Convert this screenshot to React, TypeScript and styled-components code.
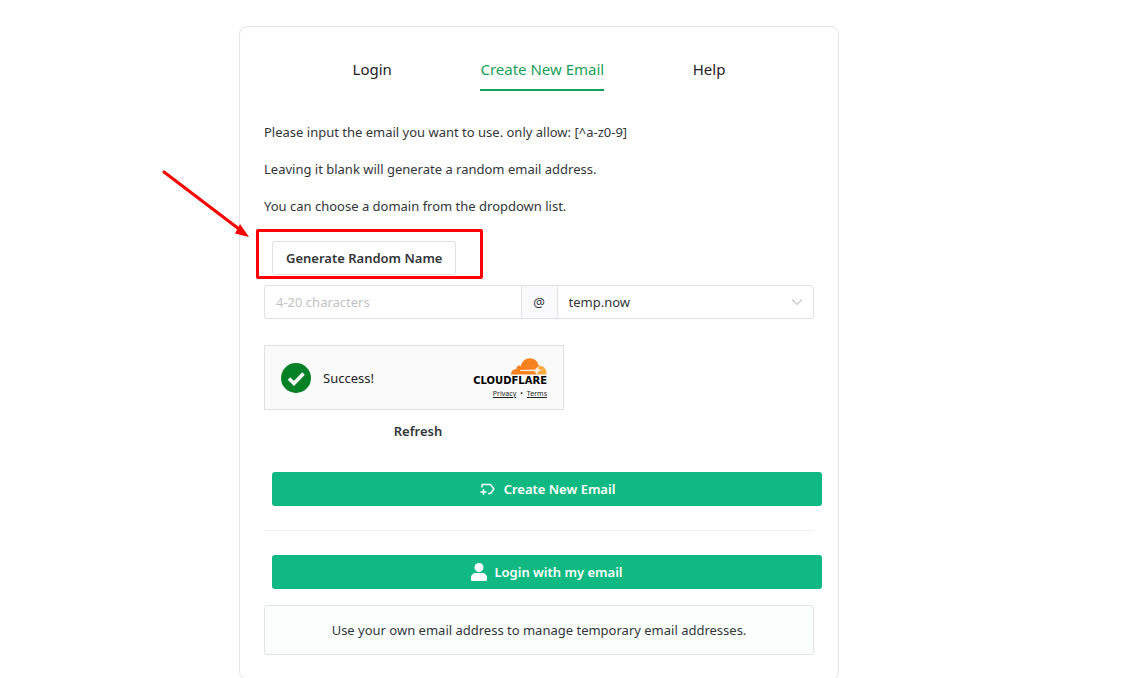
import React from "react";
import styled, { createGlobalStyle } from "styled-components";
import { MdOutlineNewLabel } from "react-icons/md";

const GlobalStyle = createGlobalStyle`
  *, *::before, *::after { box-sizing: border-box; }
  body {
    margin: 0;
    background: #fff;
    color: #333639;
    font-family: "Segoe UI", "Noto Sans", "Open Sans", sans-serif;
    font-size: 13px;
    line-height: 22px;
  }
  button, input, select { font: inherit; color: inherit; margin: 0; }
`;

const Page = styled.main`
  display: flex;
  justify-content: center;
  padding: 26px 50px 0 0;
`;

const Card = styled.section`
  width: 100%;
  max-width: 600px;
  padding: 24px;
  border: 1px solid #e6e6e9;
  border-radius: 8px;
`;

const Tabs = styled.nav`
  display: flex;
  justify-content: space-evenly;
  margin-bottom: 30px;
`;

const Tab = styled.button<{ $active?: boolean }>`
  padding: 5px 0 7px;
  border: 0;
  border-bottom: 2px solid ${(p) => (p.$active ? "#18a058" : "transparent")};
  background: none;
  color: ${(p) => (p.$active ? "#18a058" : "#1f2225")};
  font-size: 15px;
  line-height: 26px;
  cursor: pointer;
`;

const Form = styled.form`
  display: flex;
  flex-direction: column;
`;

const Notes = styled.div`
  display: flex;
  flex-direction: column;
  gap: 15px;
  margin-bottom: 24px;
`;

const Note = styled.p`
  margin: 0;
`;

const Marked = styled.div`
  position: relative;
  align-self: flex-start;
  margin: 0 0 10px 8px;
`;

const Highlight = styled.span`
  position: absolute;
  top: -12px;
  left: -16px;
  width: 227px;
  height: 50px;
  border: 3px solid #fe0000;
  border-radius: 2px;
  pointer-events: none;
`;

const Arrow = styled.svg`
  position: absolute;
  top: -73px;
  left: -112px;
  pointer-events: none;
`;

const Button = styled.button`
  display: block;
  height: 34px;
  padding: 0 13px;
  border: 1px solid #e0e0e6;
  border-radius: 3px;
  background: #fff;
  font-weight: 600;
  white-space: nowrap;
  cursor: pointer;
`;

const RefreshButton = styled(Button)`
  align-self: center;
  margin: 4px 0 0 8px;
  border-color: transparent;
`;

const PrimaryButton = styled(Button)`
  display: flex;
  align-items: center;
  justify-content: center;
  gap: 7px;
  width: 100%;
  margin-left: 8px;
  border: 0;
  background: #10b981;
  color: #fff;
`;

const InputGroup = styled.div`
  display: grid;
  grid-template-columns: minmax(0, 1fr) 37px minmax(0, 1fr);
  height: 34px;
  border: 1px solid #e0e0e6;
  border-radius: 3px;
  margin-bottom: 26px;
`;

const NameInput = styled.input`
  width: 100%;
  padding: 0 11px;
  border: 0;
  background: transparent;
  outline: none;
  &::placeholder { color: #c2c2c2; opacity: 1; }
`;

const At = styled.span`
  border: solid #e0e0e6;
  border-width: 0 1px;
  background: #fafafc;
  line-height: 32px;
  text-align: center;
`;

const SelectBox = styled.div`
  display: grid;
  align-items: center;
  > * { grid-area: 1 / 1; }
  > svg { justify-self: end; margin-right: 10px; pointer-events: none; }
`;

const DomainSelect = styled.select`
  width: 100%;
  height: 32px;
  padding: 0 30px 0 11px;
  border: 0;
  background: transparent;
  appearance: none;
  outline: none;
`;

const Verification = styled.div`
  display: flex;
  flex-direction: column;
  width: 300px;
  max-width: 100%;
  margin-bottom: 24px;
`;

const Turnstile = styled.div`
  display: flex;
  align-items: center;
  height: 65px;
  padding: 0 16px;
  border: 1px solid #e0e0e0;
  background: #fafafa;
  color: #232323;
`;

const Status = styled.span`
  flex: 1;
  margin-left: 12px;
`;

const Brand = styled.div`
  display: flex;
  flex-direction: column;
  align-items: flex-end;
  padding-top: 1px;
`;

const BrandName = styled.span`
  margin-top: 1px;
  color: #000;
  font-family: "DejaVu Sans", sans-serif;
  font-size: 10px;
  font-weight: 700;
  line-height: 10px;
`;

const Legal = styled.div`
  display: flex;
  gap: 4px;
  margin-top: 3px;
  font-size: 7px;
  line-height: 10px;
  a { color: inherit; text-underline-offset: 1px; }
`;

const Divider = styled.hr`
  width: 100%;
  height: 1px;
  margin: 24px 0;
  border: 0;
  background: #efeff5;
`;

const Alert = styled.div`
  margin-top: 16px;
  padding: 13px;
  border: 1px solid #e2e5e5;
  border-radius: 3px;
  background: #fafffe;
  text-align: center;
`;

export default function App() {
  return (
    <>
      <GlobalStyle />
      <Page>
        <Card>
          <Tabs>
            <Tab type="button">Login</Tab>
            <Tab type="button" $active aria-current="page">Create New Email</Tab>
            <Tab type="button">Help</Tab>
          </Tabs>
          <Form onSubmit={(e) => e.preventDefault()}>
            <Notes>
              <Note>Please input the email you want to use. only allow: [^a-z0-9]</Note>
              <Note>Leaving it blank will generate a random email address.</Note>
              <Note>You can choose a domain from the dropdown list.</Note>
            </Notes>
            <Marked>
              <Button type="button">Generate Random Name</Button>
              <Highlight />
              <Arrow width="90" height="72" viewBox="0 0 90 72" aria-hidden="true">
                <path d="M4 4L79 61" stroke="#fe0000" strokeWidth="3" strokeLinecap="round" />
                <path d="M89 69L75 65.500L80 56Z" fill="#fe0000" />
              </Arrow>
            </Marked>
            <InputGroup>
              <NameInput aria-label="Email name" placeholder="4-20 characters" />
              <At>@</At>
              <SelectBox>
                <DomainSelect aria-label="Email domain">
                  <option>temp.now</option>
                </DomainSelect>
                <svg width="12" height="8" viewBox="0 0 12 8" fill="none" aria-hidden="true">
                  <path d="M1 1.500L6 6.500L11 1.500" stroke="#c8c8cc" strokeWidth="1.200" />
                </svg>
              </SelectBox>
            </InputGroup>
            <Verification>
              <Turnstile>
                <svg width="30" height="30" viewBox="0 0 30 30" aria-hidden="true">
                  <circle cx="15" cy="15" r="15" fill="#038127" />
                  <path d="M8 15.500L13 20.500L22.500 10.500" fill="none" stroke="#fff" strokeWidth="3.600" />
                </svg>
                <Status>Success!</Status>
                <Brand>
                  <svg width="36" height="17" viewBox="0 0 36 17" aria-hidden="true">
                    <path
                      d="M0 16.500C0 13.500 2 11.300 5.500 11C5.200 8.300 7.500 6.700 9.800 7.900C11 3.200 14.500 .3 18.800 .3C23.300 .3 26.700 3.200 27.700 7.500L25.500 16.500Z"
                      fill="#f6821f"
                    />
                    <path d="M24.500 16.500L28 7.500C32.500 7.500 36 11 35.500 16.500Z" fill="#fbad41" />
                    <path d="M9 12L24 11.600L27 8.500L27.500 11.200L31 12.300L27.500 13.300L25.500 16.500L23.500 13.200L9 13Z" fill="#fff" fillOpacity=".85" />
                  </svg>
                  <BrandName>CLOUDFLARE</BrandName>
                  <Legal>
                    <a href="#privacy">Privacy</a>
                    <span>•</span>
                    <a href="#terms">Terms</a>
                  </Legal>
                </Brand>
              </Turnstile>
              <RefreshButton type="button">Refresh</RefreshButton>
            </Verification>
            <PrimaryButton type="submit">
              <MdOutlineNewLabel size={18} aria-hidden />
              Create New Email
            </PrimaryButton>
          </Form>
          <Divider />
          <PrimaryButton type="button">
            <svg width="16" height="18" viewBox="0 0 16 18" fill="currentColor" aria-hidden="true">
              <circle cx="8" cy="4.500" r="4.500" />
              <path d="M5 10H11C14 10 16 12 16 15V16.500Q16 18 14.500 18H1.500Q0 18 0 16.500V15C0 12 2 10 5 10Z" />
            </svg>
            Login with my email
          </PrimaryButton>
          <Alert>Use your own email address to manage temporary email addresses.</Alert>
        </Card>
      </Page>
    </>
  );
}
